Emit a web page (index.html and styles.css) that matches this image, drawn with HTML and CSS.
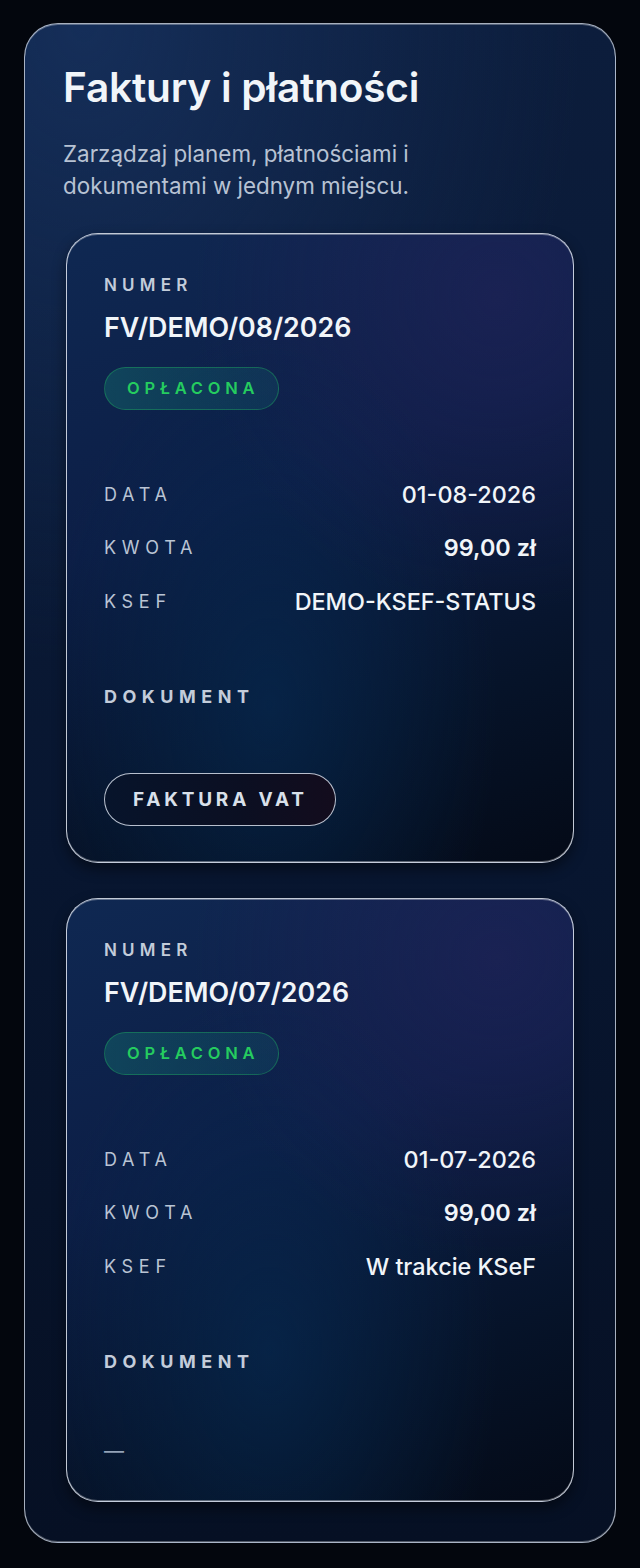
FILE: index.html
```html
<!DOCTYPE html>
<html lang="pl">
<head>
  <meta charset="UTF-8">
  <meta name="viewport" content="width=device-width, initial-scale=1.0">
  <title>Faktury i płatności</title>
  <link rel="stylesheet" href="styles.css">
</head>
<body>
  <section class="panel">
    <h1>Faktury i płatności</h1>
    <p class="lead">Zarządzaj planem, płatnościami i dokumentami w jednym miejscu.</p>

    <div class="invoices">
      <article class="invoice">
        <div class="label">Numer</div>
        <div class="number">FV/DEMO/08/2026</div>
        <span class="badge">Opłacona</span>
        <dl class="details">
          <div class="row"><dt>Data</dt><dd>01-08-2026</dd></div>
          <div class="row"><dt>Kwota</dt><dd class="strong">99,00 zł</dd></div>
          <div class="row"><dt>KSeF</dt><dd>DEMO-KSEF-STATUS</dd></div>
        </dl>
        <div class="label doc-label">Dokument</div>
        <div class="doc">
          <button class="doc-btn">Faktura VAT</button>
        </div>
      </article>

      <article class="invoice">
        <div class="label">Numer</div>
        <div class="number">FV/DEMO/07/2026</div>
        <span class="badge">Opłacona</span>
        <dl class="details">
          <div class="row"><dt>Data</dt><dd>01-07-2026</dd></div>
          <div class="row"><dt>Kwota</dt><dd class="strong">99,00 zł</dd></div>
          <div class="row"><dt>KSeF</dt><dd>W trakcie KSeF</dd></div>
        </dl>
        <div class="label doc-label">Dokument</div>
        <div class="doc">
          <span class="empty">—</span>
        </div>
      </article>
    </div>
  </section>
</body>
</html>
```

FILE: styles.css
```css
body {
  margin: 0;
  padding: 23px 24px;
  background: #03060d;
  font-family: Inter, 'Noto Sans', Arial, sans-serif;
  color: #f1f5f9;
}
.panel {
  border: 1px solid rgba(222, 230, 242, 0.75);
  border-radius: 34px;
  padding: 40px 37px 40px;
  background:
    radial-gradient(120% 60% at 10% 0%, rgba(22, 48, 92, 0.9), rgba(22, 48, 92, 0) 70%),
    linear-gradient(180deg, #0c1d3c 0%, #081630 55%, #061024 100%);
  box-shadow: inset 0 1px 0 rgba(255, 255, 255, 0.3), inset 0 -1px 0 rgba(255, 255, 255, 0.3);
}
h1 {
  margin: 0 0 0 1px;
  font-size: 40.6px;
  line-height: 48px;
  font-weight: 600;
  letter-spacing: -0.2px;
  color: #f1f5f9;
}
.lead {
  margin: 26px 0 0 1px;
  font-size: 22.4px;
  line-height: 32px;
  color: #b7c2d3;
  max-width: 380px;
}
.invoices {
  margin: 31px 4px 0;
  display: flex;
  flex-direction: column;
  gap: 35px;
}
.invoice {
  border: 1px solid rgba(228, 234, 244, 0.85);
  border-radius: 32px;
  padding: 39px 37px 36px;
  background:
    radial-gradient(60% 50% at 85% 10%, rgba(38, 34, 92, 0.5), rgba(38, 34, 92, 0) 100%),
    radial-gradient(45% 60% at 40% 75%, rgba(6, 42, 82, 0.65), rgba(6, 42, 82, 0) 100%),
    linear-gradient(160deg, #0f2852 0%, #0c1e46 40%, #061329 75%, #040a17 100%);
  box-shadow:
    inset 0 1px 0 rgba(255, 255, 255, 0.35),
    inset 0 -1px 0 rgba(255, 255, 255, 0.35),
    0 6px 14px rgba(0, 0, 0, 0.45);
}
.label {
  font-size: 17px;
  line-height: 24px;
  font-weight: 600;
  letter-spacing: 5.2px;
  text-transform: uppercase;
  color: #c3ccda;
}
.number {
  margin-top: 14px;
  font-size: 26.8px;
  line-height: 32px;
  font-weight: 600;
  color: #f1f5f9;
}
.badge {
  display: inline-block;
  margin-top: 24px;
  height: 43px;
  line-height: 41px;
  box-sizing: border-box;
  padding: 0 19px 0 22px;
  border-radius: 22px;
  border: 1px solid rgba(34, 197, 94, 0.35);
  background: linear-gradient(90deg, rgba(20, 110, 110, 0.45), rgba(20, 90, 110, 0.3));
  color: #25cc5f;
  font-size: 16.5px;
  font-weight: 600;
  letter-spacing: 4.8px;
  text-transform: uppercase;
}
.details {
  margin: 69px 0 0;
  display: flex;
  flex-direction: column;
  gap: 23.5px;
}
.row {
  display: flex;
  justify-content: space-between;
  align-items: center;
  height: 30px;
}
dt {
  font-size: 18px;
  letter-spacing: 5.7px;
  text-transform: uppercase;
  color: #b9c4d4;
}
dd {
  margin: 0;
  font-size: 23.4px;
  font-weight: 500;
  color: #f1f5f9;
}
dd.strong {
  font-weight: 600;
}
.doc-label {
  margin-top: 69px;
  font-size: 18px;
  font-weight: 700;
  letter-spacing: 5.5px;
}
.doc {
  margin-top: 64px;
}
.doc-btn {
  height: 53px;
  padding: 0 27px 0 28px;
  border-radius: 27px;
  border: 1.5px solid rgba(214, 222, 235, 0.85);
  background: linear-gradient(90deg, #07142b 0%, #0b0f22 60%, #130c1d 100%);
  color: #d9e0ea;
  font-family: inherit;
  font-size: 19px;
  font-weight: 700;
  letter-spacing: 3.8px;
  text-transform: uppercase;
  cursor: pointer;
}
.empty {
  display: block;
  height: 27px;
  line-height: 27px;
  font-size: 20px;
  color: #94a3b8;
}
```
